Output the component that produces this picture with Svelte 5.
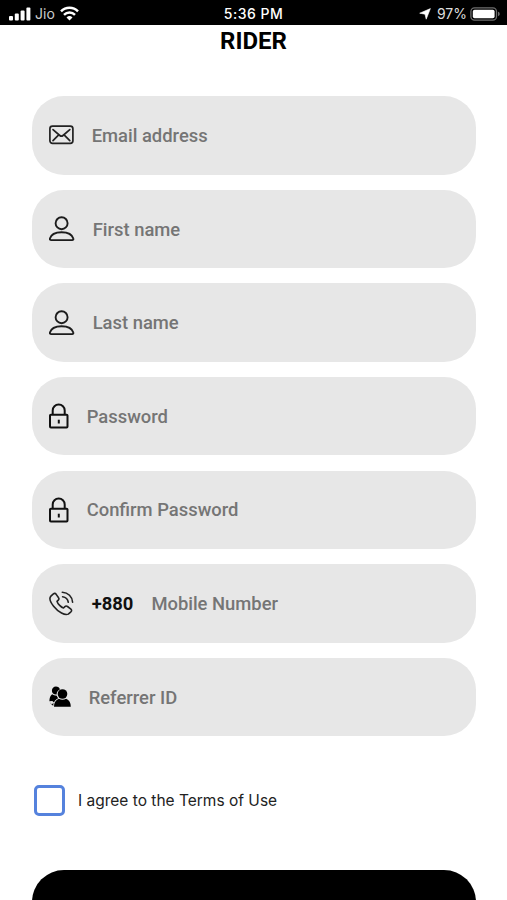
<script lang="ts">
	interface Field {
		name: string;
		placeholder: string;
		icon: "mail" | "user" | "lock" | "phone" | "referrer";
		type?: string;
		prefix?: string;
	}

	const fields: Field[] = [
		{ name: "email", placeholder: "Email address", icon: "mail" },
		{ name: "firstName", placeholder: "First name", icon: "user" },
		{ name: "lastName", placeholder: "Last name", icon: "user" },
		{ name: "password", placeholder: "Password", icon: "lock", type: "password" },
		{ name: "confirmPassword", placeholder: "Confirm Password", icon: "lock", type: "password" },
		{ name: "mobile", placeholder: "Mobile Number", icon: "phone", type: "tel", prefix: "+880" },
		{ name: "referrer", placeholder: "Referrer ID", icon: "referrer" }
	];

	let values = $state<Record<string, string>>({});
	let agreed = $state(false);
</script>

<div class="screen">
	<header class="status-bar">
		<div class="carrier">
			<svg class="signal" width="22" height="14" viewBox="0 0 22 14" fill="#fff">
				<rect x="0" y="9" width="4" height="4.6" rx="1" />
				<rect x="5.8" y="6.6" width="4" height="7" rx="1" />
				<rect x="11.6" y="3.5" width="4" height="10.1" rx="1" />
				<rect x="17.4" y="0.6" width="4" height="13" rx="1" />
			</svg>
			<span class="network">Jio</span>
			<svg class="wifi" width="19" height="15" viewBox="0 0 19 15" fill="none" stroke="#fff" stroke-width="2.5">
				<path d="M1 5.3a12 12 0 0 1 17 0" />
				<path d="M4 8.8a7.8 7.8 0 0 1 11 0" />
				<path d="M9.5 14.5l-3-3a4.3 4.3 0 0 1 6 0z" fill="#fff" stroke="none" />
			</svg>
		</div>
		<span class="clock">5:36 PM</span>
		<div class="power">
			<svg width="12" height="12" viewBox="0 0 12 12" fill="#fff" stroke="#fff" stroke-width="0.6">
				<path d="M11.4.6L7.2 11.2 6 6.200.7 5.200z" />
			</svg>
			<span class="percent">97%</span>
			<svg class="battery" width="31" height="14" viewBox="0 0 31 14">
				<rect x="0.9" y="0.9" width="25.6" height="12.2" rx="3.6" fill="none" stroke="#6d6d6d" stroke-width="1.3" />
				<rect x="2.8" y="2.7" width="21.8" height="8.6" rx="1.8" fill="#fff" />
				<path d="M28 4.8c2.3.5 2.3 3.9 0 4.4z" fill="#6d6d6d" />
			</svg>
		</div>
	</header>

	<h1>RIDER</h1>

	<form>
		{#each fields as field}
			<label class="field">
				{#if field.icon === "mail"}
					<svg class="icon mail" width="25" height="20" viewBox="0 0 25 20" fill="none" stroke="#222" stroke-width="1.7">
						<rect x="0.9" y="1.1" width="23" height="17.3" rx="2.6" />
						<path d="M4 4.6l6.8 5.9c1 .9 2.2.9 3.2 0l6.8-5.9M4 15.6l5.7-5.8M20.8 15.6l-5.7-5.8" stroke-linecap="round" />
					</svg>
				{:else if field.icon === "user"}
					<svg class="icon user" width="26" height="26" viewBox="0 0 26 26" fill="none" stroke="#1c1c1c" stroke-width="1.9">
						<circle cx="12.6" cy="7.2" r="6" />
						<path d="M2.2 24.1h20.9c1 0 1.5-.6 1.2-1.5-1.1-4-5.4-6.4-11.7-6.4S2 18.6.9 22.6c-.2.9.3 1.5 1.3 1.500z" />
					</svg>
				{:else if field.icon === "lock"}
					<svg class="icon lock" width="20" height="26" viewBox="0 0 20 26" fill="none" stroke="#111" stroke-width="2">
						<rect x="1" y="11.7" width="17.5" height="12.7" rx="0.9" />
						<path d="M3.7 11.7V7.500a6 6 0 0 1 12 0v4.200" />
						<path d="M9.800 16.700v3.800" />
					</svg>
				{:else if field.icon === "phone"}
					<svg class="icon phone" width="25" height="25" viewBox="0 0 25 25" fill="none" stroke="#222" stroke-width="1.6" stroke-linecap="round" stroke-linejoin="round">
						<path d="M4.4 2.8L1.9 5.1C.2 6.9.8 10.4 4.6 15.2c4.9 6.1 11.3 9.500 14.7 7.900l2.600-2.300c.9-.9.9-1.900 0-2.700l-3.400-2.600c-.9-.7-1.800-.7-2.600.1l-1.400 1.400c-2.200-.5-5.900-4.200-6.500-6.600l1.300-1.300c.8-.8.8-1.700.1-2.600L7 3.100c-.7-.9-1.700-1-2.600-.3z" />
						<path d="M13.300 1.300c5.800.3 10 4.300 10.300 10M13.600 5.800c3.200.4 5.200 2.300 5.700 5.500" />
					</svg>
				{:else}
					<svg class="icon referrer" width="22" height="22" viewBox="0 0 22 22" fill="#000">
						<path d="M6.900.6c2.100 0 3.700 1.300 4 3-2.100.8-3.300 2.600-3.300 5C4.600 8.700 2.900 6.900 2.900 4.700 2.900 2.400 4.700.6 6.900.6z" />
						<path d="M3.100 8.300c1.200.9 2.600 1.400 4.700 1.400.2 1 .7 1.800 1.400 2.500-2 .8-3.400 2.200-4.200 4.300l-1.700-1.600-2.900.4c0-3.100.9-5.600 2.700-7z" />
						<path d="M.7 16l1.700 2.400 2.100-1.300-.3 2.800z" />
						<circle cx="13.500" cy="8" r="4.800" />
						<path d="M9.900 12.800c2.200 1.300 5 1.300 7.200 0 3.200 1.100 4.700 3.900 4.700 8H5c0-4.100 1.600-6.900 4.900-8z" />
					</svg>
				{/if}
				{#if field.prefix}
					<span class="prefix">{field.prefix}</span>
				{/if}
				<input
					type={field.type ?? "text"}
					name={field.name}
					placeholder={field.placeholder}
					bind:value={values[field.name]}
				/>
			</label>
		{/each}

		<label class="terms">
			<input type="checkbox" bind:checked={agreed} />
			<span>I agree to the Terms of Use</span>
		</label>

		<button type="button" aria-label="Sign up" disabled={!agreed}></button>
	</form>
</div>

<style>
	:global(body) {
		background: #fff;
		overflow: hidden;
	}

	.screen {
		height: 900px;
		overflow: hidden;
		background: #fff;
		font-family: Roboto, "Liberation Sans", sans-serif;
	}

	.status-bar {
		display: grid;
		grid-template-columns: 1fr auto 1fr;
		align-items: center;
		box-sizing: border-box;
		height: 25px;
		padding: 2px 6px 0 9px;
		background: #000;
		color: #fff;
		font-family: Inter, sans-serif;
		font-size: 14px;
	}

	.carrier,
	.power {
		display: flex;
		align-items: center;
	}

	.power {
		justify-content: flex-end;
	}

	.network {
		margin: 0 5px 0 4px;
		color: #ccc;
	}

	.clock {
		margin-right: 3px;
		font-weight: 500;
		letter-spacing: 0.5px;
	}

	.percent {
		margin: 0 3px 0 6px;
		color: #ddd;
	}

	h1 {
		margin: 0;
		padding-top: 2px;
		text-align: center;
		font-size: 24px;
		line-height: 28px;
		font-weight: 700;
	}

	form {
		display: flex;
		flex-direction: column;
		gap: 15.1px;
		padding: 41.2px 31px 0 31.5px;
	}

	.field {
		display: flex;
		align-items: center;
		box-sizing: border-box;
		height: 78.5px;
		padding: 0 17.5px;
		border-radius: 32px;
		background: #e7e7e7;
	}

	.icon {
		flex: none;
		margin-right: 17.7px;
	}

	.prefix {
		margin-right: 18px;
		font-size: 18.4px;
		font-weight: 700;
		color: #111;
	}

	.field input {
		flex: 1;
		min-width: 0;
		padding: 0;
		border: none;
		outline: none;
		background: none;
		font-family: inherit;
		font-size: 18.4px;
		font-weight: 500;
		color: #111;
	}

	.field input::placeholder {
		color: #757575;
		opacity: 1;
	}

	.terms {
		display: flex;
		align-items: center;
		gap: 13px;
		margin: 34px 0 39px 2.5px;
		font-family: Inter, sans-serif;
		font-size: 15.5px;
		color: #222;
	}

	.terms input {
		appearance: none;
		width: 31px;
		height: 31px;
		margin: 0;
		border: 3px solid #5582dd;
		border-radius: 5px;
	}

	.terms input:checked {
		background: #5582dd;
	}

	button {
		flex: none;
		height: 78.5px;
		border: none;
		border-radius: 32px;
		background: #000;
	}
</style>
